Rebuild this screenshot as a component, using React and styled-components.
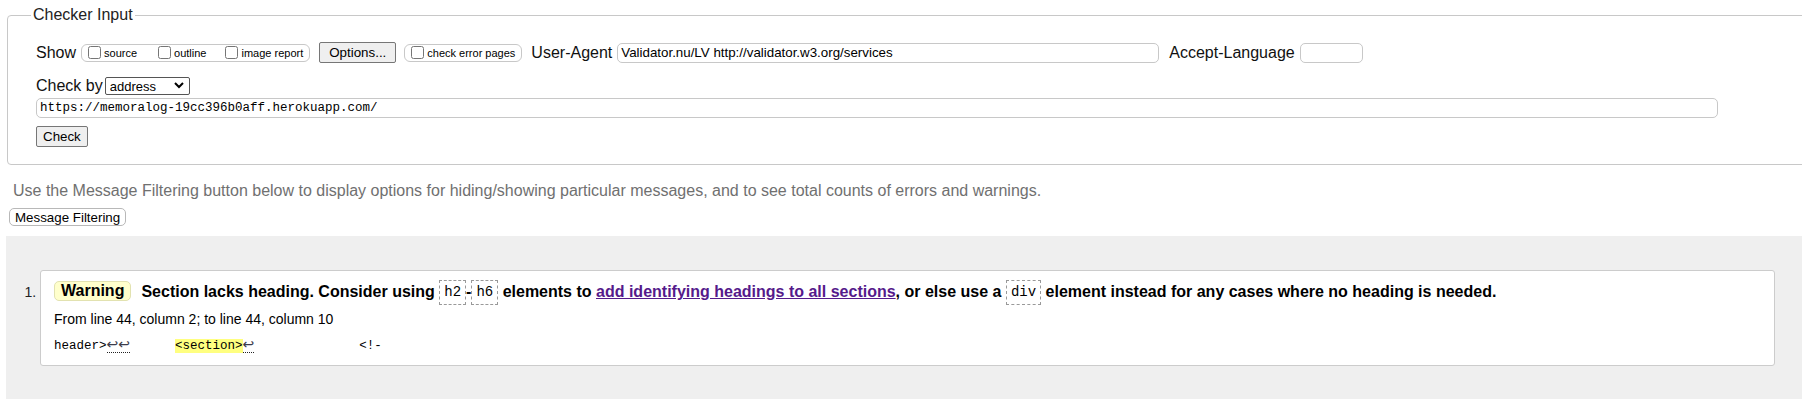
import styled, { createGlobalStyle } from 'styled-components'

//#region Custom theme
const GlobalStyle = createGlobalStyle`
  html, body {
    margin: 0;
    padding: 0;
    overflow: hidden;
    background: #fff;
    font-family: 'Liberation Sans', Arial, sans-serif;
    color: #000;
  }
`
const Page = styled.div`
  width: 1803px;
  padding: 6px 0 30px 6px;
`
const Fieldset = styled.fieldset`
  margin: 0 0 0 1px;
  padding: 17px 28px 17px 28px;
  border: 1px solid #c8c8c8;
  border-radius: 4px;
  min-width: 0;
`
const Legend = styled.legend`
  margin-left: -5px;
  padding: 0 2px;
  font-size: 16px;
  line-height: 18px;
  color: #222;
`
const Row = styled.div`
  display: flex;
  align-items: center;
  height: ${(p) => p.$height || 23}px;
  margin-top: ${(p) => p.$top || 0}px;
`
const Label = styled.span`
  font-size: 16px;
  margin-right: ${(p) => p.$gap ?? 3}px;
  margin-left: ${(p) => p.$left || 0}px;
  color: #111;
`
const OptionGroup = styled.span`
  display: inline-flex;
  align-items: center;
  height: 16px;
  padding: 0 6px 0 0;
  border: 1px solid #c8c8c8;
  border-radius: 6px;
  margin-right: ${(p) => p.$gap || 0}px;
`
const CheckLabel = styled.label`
  display: inline-flex;
  align-items: center;
  font-size: 11px;
  margin-right: ${(p) => p.$gap || 0}px;

  input {
    width: 13px;
    height: 13px;
    margin: 0 3px 0 6px;
  }
`
const PlainButton = styled.button`
  font-family: 'Liberation Sans', Arial, sans-serif;
  font-size: ${(p) => p.$size || 13.33}px;
  height: ${(p) => p.$height || 21}px;
  padding: 0 ${(p) => p.$pad || 6}px;
  background: #efefef;
  border: 1px solid #767676;
  border-radius: 2px;
  color: #000;
  margin-right: ${(p) => p.$gap || 0}px;
`
const TextInput = styled.input`
  box-sizing: border-box;
  width: ${(p) => p.$width}px;
  height: 20px;
  padding: 0 3px;
  border: 1px solid #c8c8c8;
  border-radius: 5px;
  font-family: ${(p) => (p.$mono ? "'Liberation Mono', monospace" : "'Liberation Sans', Arial, sans-serif")};
  font-size: ${(p) => (p.$mono ? 12.5 : 13.33)}px;
  color: #000;
  outline: none;
`
const UrlInput = styled(TextInput)`
  display: block;
  margin-top: 1px;
`
const SelectWrap = styled.span`
  position: relative;
  display: inline-block;
`
const Select = styled.select`
  appearance: none;
  box-sizing: border-box;
  width: 85px;
  height: 18px;
  padding: 0 0 0 4px;
  border: 1px solid #555;
  border-radius: 2px;
  background: #fff;
  font-family: 'Liberation Sans', Arial, sans-serif;
  font-size: 13px;
  color: #000;
`
const Chevron = styled.svg`
  position: absolute;
  right: 6px;
  top: 5px;
  pointer-events: none;
`
const CheckButton = styled(PlainButton)`
  display: block;
  margin-top: 8px;
`
const Intro = styled.p`
  margin: 17px 0 0 7px;
  font-size: 16px;
  line-height: 18px;
  color: #707070;
`
const FilterButton = styled.button`
  display: block;
  margin: 8px 0 0 3px;
  height: 18px;
  padding: 0 5px;
  background: #fff;
  border: 1px solid #b8b8b8;
  border-radius: 5px;
  font-family: 'Liberation Sans', Arial, sans-serif;
  font-size: 13.33px;
  color: #000;
`
const Results = styled.ol`
  margin: 10px 0 0 0;
  padding: 34px 34px 33px 34px;
  background: #efefef;
  list-style: decimal;
  font-size: 14px;
`
const Message = styled.li`
  padding: 8px 13px 11px 13px;
  background: #fff;
  border: 1px solid #ccc;
  border-radius: 3px;

  &::marker {
    font-size: 14px;
    color: #222;
  }
`
const Heading = styled.p`
  margin: 0;
  font-size: 16px;
  font-weight: bold;
  line-height: 25px;
`
const Badge = styled.span`
  display: inline-block;
  line-height: 18px;
  padding: 0 6px;
  margin-right: 10px;
  background: #ffffcc;
  border: 1px solid #e2e2b0;
  border-radius: 5px;
  vertical-align: 1px;
`
const Code = styled.code`
  display: inline-block;
  line-height: 19px;
  padding: 2px 4px;
  border: 1px dashed #999;
  font-family: 'Liberation Mono', monospace;
  font-size: 14px;
  font-weight: normal;
  vertical-align: middle;
`
const Link = styled.a`
  color: #551a8b;
  text-decoration: underline;
`
const Location = styled.p`
  margin: 6px 0 0 0;
  font-size: 14px;
  line-height: 16px;
`
const Extract = styled.p`
  margin: 10px 0 0 0;
  font-family: 'Liberation Mono', monospace;
  font-size: 12.5px;
  line-height: 16px;
  white-space: pre;
`
const LineFeed = styled.span`
  font-family: 'DejaVu Sans', sans-serif;
  font-size: 14px;
  line-height: 14px;
  color: #3c3c4a;
  border-bottom: 1px dotted #222;
`
const Highlight = styled.b`
  font-weight: normal;
  background: #ffff80;
`
//#endregion

export default function App() {
  return (
    <Page>
      <GlobalStyle />
      <Fieldset>
        <Legend>Checker Input</Legend>
        <Row>
          <Label $gap={5}>Show</Label>
          <OptionGroup $gap={9}>
            <CheckLabel $gap={15}>
              <input type="checkbox" />
              source
            </CheckLabel>
            <CheckLabel $gap={13}>
              <input type="checkbox" />
              outline
            </CheckLabel>
            <CheckLabel>
              <input type="checkbox" />
              image report
            </CheckLabel>
          </OptionGroup>
          <PlainButton $pad={9} $gap={8}>
            Options...
          </PlainButton>
          <OptionGroup $gap={9}>
            <CheckLabel>
              <input type="checkbox" />
              check error pages
            </CheckLabel>
          </OptionGroup>
          <Label $gap={5}>User-Agent</Label>
          <TextInput $width={542} defaultValue="Validator.nu/LV http://validator.w3.org/services" />
          <Label $left={10} $gap={5}>
            Accept-Language
          </Label>
          <TextInput $width={63} />
        </Row>
        <Row $top={11} $height={22}>
          <Label $gap={2}>Check by</Label>
          <SelectWrap>
            <Select defaultValue="address">
              <option value="address">address</option>
              <option value="upload">file upload</option>
              <option value="input">text input</option>
            </Select>
            <Chevron width="10" height="7" viewBox="0 0 10 7">
              <polyline points="1,1 5,5 9,1" fill="none" stroke="#000" strokeWidth="2" />
            </Chevron>
          </SelectWrap>
        </Row>
        <UrlInput $mono $width={1682} defaultValue="https://memoralog-19cc396b0aff.herokuapp.com/" />
        <CheckButton>Check</CheckButton>
      </Fieldset>

      <Intro>
        Use the Message Filtering button below to display options for hiding/showing particular messages, and to see total counts of errors and warnings.
      </Intro>
      <FilterButton>Message Filtering</FilterButton>

      <Results>
        <Message>
          <Heading>
            <Badge>Warning</Badge>
            Section lacks heading. Consider using <Code>h2</Code>-<Code>h6</Code> elements to{' '}
            <Link href="#">add identifying headings to all sections</Link>, or else use a <Code>div</Code> element instead for any cases where no
            heading is needed.
          </Heading>
          <Location>From line 44, column 2; to line 44, column 10</Location>
          <Extract>
            header&gt;<LineFeed>↩↩</LineFeed>
            {'      '}
            <Highlight>&lt;section&gt;</Highlight>
            <LineFeed>↩</LineFeed>
            {'              '}&lt;!-
          </Extract>
        </Message>
      </Results>
    </Page>
  )
}
